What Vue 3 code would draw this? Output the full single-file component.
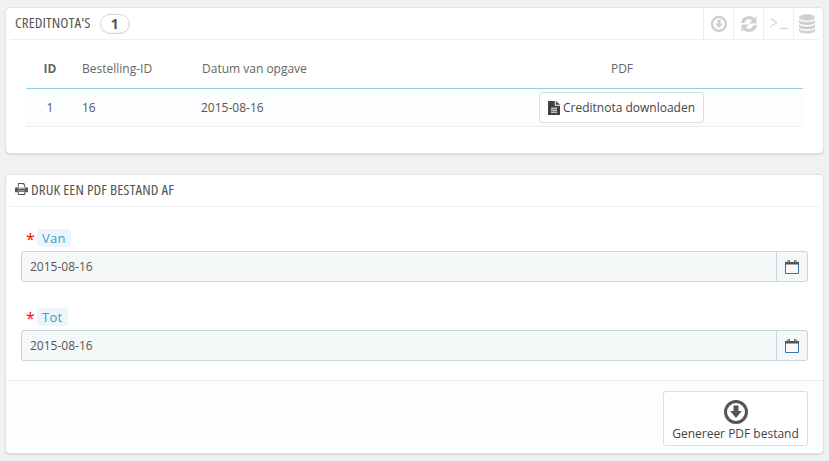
<script setup>
const rows = [{ id: 1, order: 16, date: '2015-08-16' }]
const fields = [{ label: 'Van', value: '2015-08-16' }, { label: 'Tot', value: '2015-08-16' }]
</script>

<template>
  <div class="page">
    <section class="panel first">
      <header class="head">
        <h3 class="title">CREDITNOTA'S</h3>
        <span class="badge">1</span>
        <div class="tools">
          <span class="tool">
            <svg width="18" height="18" viewBox="0 0 18 18"><circle cx="9" cy="9" r="7" fill="none" stroke="#cfcfcf" stroke-width="2.400"/><path d="M7.400 4.800h3.200v4h2.200L9 13 5.200 8.800h2.200z" fill="#cfcfcf"/></svg>
          </span>
          <span class="tool">
            <svg width="18" height="18" viewBox="0 0 18 18" fill="#cfcfcf"><path d="M1 8C1.500 3.800 5 1 9 1c2.200 0 4.100.9 5.500 2.200L16.500 1v7.500h-7.500l2.900-2.900C11.100 4.800 10.100 4.300 9 4.300 6.800 4.300 5 5.800 4.400 8z"/><path d="M17 10c-.5 4.200-4 7-8 7-2.200 0-4.100-.9-5.500-2.200L1.500 17V9.500H9l-2.900 2.900c.8.8 1.800 1.300 2.900 1.300 2.200 0 4-1.500 4.600-3.700z"/></svg>
          </span>
          <span class="tool">
            <svg width="18" height="18" viewBox="0 0 18 18" fill="none" stroke="#d6d6d6"><path d="M.5 3.500l6.500 4-6.500 4" stroke-width="1.200"/><path d="M10 13.500h8" stroke-width="1.200"/></svg>
          </span>
          <span class="tool last">
            <svg width="16" height="20" viewBox="0 0 16 20" fill="#cfcfcf"><ellipse cx="8" cy="3.500" rx="8" ry="3.200"/><path d="M0 5.500c1 1.800 4 2.500 8 2.500s7-.7 8-2.500v3c-1 1.800-4 2.500-8 2.500s-7-.7-8-2.500zM0 10c1 1.800 4 2.500 8 2.500s7-.7 8-2.500v3c-1 1.800-4 2.500-8 2.500s-7-.7-8-2.500zM0 14.500c1 1.800 4 2.500 8 2.500s7-.7 8-2.500V17c-1 1.800-4 2.500-8 2.500s-7-.7-8-2.500z"/></svg>
          </span>
        </div>
      </header>
      <div class="table-wrap">
        <table class="table">
          <thead>
            <tr>
              <th class="c-id"><b>ID</b></th>
              <th class="c-order">Bestelling-ID</th>
              <th class="c-date">Datum van opgave</th>
              <th class="c-pdf">PDF</th>
            </tr>
          </thead>
          <tbody>
            <tr v-for="r in rows" :key="r.id">
              <td class="c-id">{{ r.id }}</td>
              <td class="c-order">{{ r.order }}</td>
              <td class="c-date val">{{ r.date }}</td>
              <td class="c-pdf">
                <button class="dl">
                  <svg width="12" height="14" viewBox="0 0 12 14"><path d="M0 0h6.800v4.700H12V14H0z" fill="#3d4045"/><path d="M7.800 0L12 3.700H7.800z" fill="#3d4045"/><path d="M3 7.200h6M3 9.200h6M3 11.200h6" stroke="#fff" stroke-width="1"/></svg>
                  Creditnota downloaden
                </button>
              </td>
            </tr>
          </tbody>
        </table>
      </div>
    </section>

    <section class="panel second">
      <header class="head">
        <svg class="printer" width="13" height="12" viewBox="0 0 14 13" fill="#555"><path d="M3 0h6.500L11 1.500V5H3zM4 1v3.500h6V2H8.500V1z" fill-rule="evenodd"/><path d="M1.500 4.500H3V6h8V4.500h1.500c.8 0 1.500.7 1.500 1.500v4h-3v-2H3v2H0V6c0-.8.7-1.500 1.500-1.500z"/><path d="M3 8.500h8V13H3zM4 9.500V12h6V9.500z" fill-rule="evenodd"/></svg>
        <h3 class="title">DRUK EEN PDF BESTAND AF</h3>
      </header>
      <div class="form">
        <div v-for="f in fields" :key="f.label" class="field">
          <div class="label-row">
            <span class="star">*</span>
            <span class="label">{{ f.label }}</span>
          </div>
          <div class="input-group">
            <div class="input">{{ f.value }}</div>
            <div class="addon">
              <svg width="14" height="14" viewBox="0 0 14 14"><path d="M.5 2.500h13v11H.5z" fill="#f9fbfc" stroke="#3f6f9f"/><path d="M0 2h14v2.500H0z" fill="#4a5560"/><path d="M2.500 .3h2.500v3H2.500zM9 .3h2.500v3H9z" fill="#4a5560"/><path d="M3.300 1h.9v1.600h-.9zM9.800 1h.9v1.600h-.9z" fill="#c9ced2"/></svg>
            </div>
          </div>
        </div>
      </div>
      <footer class="foot">
        <button class="gen">
          <svg width="26" height="26" viewBox="0 0 26 26"><circle cx="13" cy="13" r="10.500" fill="none" stroke="#555" stroke-width="3"/><path d="M10.500 6.500h5V12h3.300L13 19l-5.800-7h3.300z" fill="#555"/></svg>
          <span>Genereer PDF bestand</span>
        </button>
      </footer>
    </section>
  </div>
</template>

<style>
html, body { margin: 0; background: #eff1f2; }
</style>

<style scoped>
.page {
  width: 829px;
  height: 461px;
  box-sizing: border-box;
  padding: 7px 5px 0 5px;
  overflow: hidden;
  background: #eff1f2;
  font-family: "Open Sans", "DejaVu Sans", sans-serif;
  font-size: 12px;
  color: #555;
}
.panel {
  box-sizing: border-box;
  background: #fff;
  border: 1px solid #e0e2e3;
  border-radius: 5px;
  box-shadow: 0 1px 1px rgba(0, 0, 0, .12);
  width: 819px;
}
.first { height: 147px; }
.second { height: 280px; margin-top: 20px; display: flex; flex-direction: column; }
.head {
  height: 31px;
  margin: 0 4px;
  border-bottom: 1px solid #eeeeee;
  display: flex;
  align-items: center;
  padding-left: 5px;
  flex: none;
}
.title {
  margin: 0 0 3px;
  font-size: 15px;
  font-weight: 500;
  letter-spacing: .12px;
  color: #555;
  font-stretch: 75%;
  line-height: 20px;
  white-space: nowrap;
}
.badge {
  box-sizing: border-box;
  margin-left: 9px;
  width: 30px;
  height: 20px;
  border: 1px solid #d5d5d5;
  border-radius: 10px;
  text-align: center;
  line-height: 17px;
  font-weight: 700;
  font-size: 14px;
  color: #555;
  box-shadow: inset 0 -1px 1px rgba(0,0,0,.04);
}
.tools { margin-left: auto; display: flex; height: 100%; }
.tool {
  width: 29px;
  border-left: 1px solid #eeeeee;
  display: flex;
  align-items: center;
  justify-content: center;
}
.tool.last { width: 25px; }
.table-wrap { padding: 9px 20px 0 20px; }
.table { width: 777px; border-collapse: collapse; table-layout: fixed; }
th {
  height: 39px;
  padding: 0;
  font-weight: 400;
  font-size: 12px;
  color: #666;
  text-align: left;
  border-bottom: 1px solid #96cdee;
}
td {
  height: 37px;
  padding: 0;
  font-size: 12px;
  color: #555;
  background: #fcfdfe;
  border-bottom: 1px solid #eaedef;
}
.c-id { width: 48px; text-align: center; }
.c-id b { font-weight: 700; }
.c-order { width: 128px; padding-left: 8px; box-sizing: border-box; }
th.c-date { width: 240px; }
.c-date { width: 240px; }
td.val { text-indent: -1px; }
.c-pdf { text-align: center; padding-right: 1px; box-sizing: border-box; }
.dl {
  box-sizing: border-box;
  height: 31px;
  width: 165px;
  margin-right: 2px;
  background: #fff;
  border: 1px solid #dcdfe1;
  border-radius: 3px;
  font: 12px "Open Sans", sans-serif;
  color: #444;
  display: inline-flex;
  align-items: center;
  justify-content: center;
  gap: 3px;
  padding: 0 0 0 1px;
  vertical-align: middle;
}
.printer { margin: 0 3px 3px 0; }
.form { padding: 22px 15px 0 15px; flex: 1; }
.field { margin-bottom: 26px; }
.field + .field { margin-bottom: 0; }
.label-row { display: flex; align-items: center; height: 20px; margin-bottom: 2px; padding-left: 5px; }
.star { color: #f00; font-size: 16px; width: 11px; line-height: 16px; }
.label {
  margin-bottom: 2px;
  background: #ebf6fb;
  color: #3f9fcf;
  border-radius: 3px;
  padding: 0 5px;
  font-size: 13px;
  line-height: 18px;
  letter-spacing: .3px;
}
.input-group {
  box-sizing: border-box;
  width: 787px;
  height: 31px;
  border: 1px solid #c7d6db;
  border-radius: 3px;
  display: flex;
  background: #f5f8f9;
}
.input {
  flex: 1;
  padding-left: 8px;
  line-height: 29px;
  font-size: 12px;
  color: #555;
}
.addon {
  width: 30px;
  border-left: 1px solid #c7d6db;
  display: flex;
  align-items: center;
  justify-content: center;
}
.foot {
  height: 73px;
  flex: none;
  box-sizing: border-box;
  border-top: 1px solid #eaedef;
  background: #fcfdfe;
  border-radius: 0 0 5px 5px;
  display: flex;
  justify-content: flex-end;
  padding: 10px 15px 0 0;
}
.gen {
  box-sizing: border-box;
  width: 145px;
  height: 55px;
  background: #fff;
  border: 1px solid #dcdfe1;
  border-radius: 3px;
  font: 12px "Open Sans", sans-serif;
  color: #444;
  padding: 7px 0 0;
  display: flex;
  flex-direction: column;
  align-items: center;
  gap: 0;
}
</style>
